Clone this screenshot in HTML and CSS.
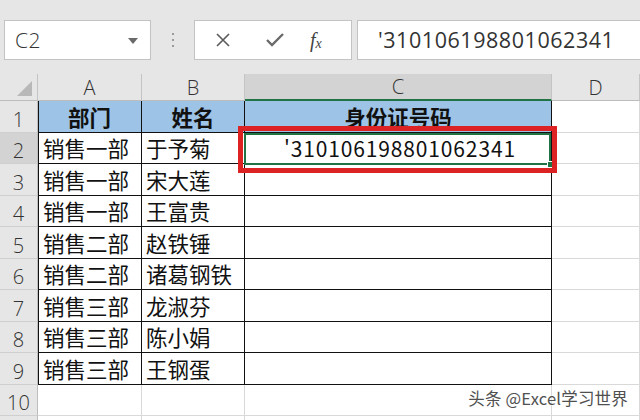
FILE: index.html
```html
<!DOCTYPE html>
<html lang="zh">
<head>
<meta charset="utf-8">
<link rel="stylesheet" href="styles.css">
</head>
<body>
<div class="toolbar">
  <div class="namebox"><span class="ref">C2</span><span class="caret"></span></div>
  <div class="grip"><i></i><i></i><i></i></div>
  <div class="fbtns">
    <svg class="ic-x" width="16" height="16" viewBox="0 0 16 16"><path d="M2 2 L14 14 M14 2 L2 14" stroke="#5a5a5a" stroke-width="1.6" fill="none"/></svg>
    <svg class="ic-ok" width="20" height="16" viewBox="0 0 20 16"><path d="M2 8 L7 13 L18 2" stroke="#6a6a6a" stroke-width="2.4" fill="none"/></svg>
    <span class="fx">f<sub>x</sub></span>
  </div>
  <div class="finput">'310106198801062341</div>
</div>
<div class="sheet">
  <div class="corner"><span class="tri"></span></div>
  <div class="ch">A</div><div class="ch">B</div><div class="ch sel">C</div><div class="ch">D</div>

  <div class="rh">1</div><div class="c t a h">部门</div><div class="c t h">姓名</div><div class="c t h">身份证号码</div><div class="c"></div>

  <div class="rh sel">2</div><div class="c t a">销售一部</div><div class="c t">于予菊</div>
  <div class="c t num active">'310106198801062341<span class="cursor"></span><span class="handle"></span><span class="mark"></span></div><div class="c"></div>

  <div class="rh">3</div><div class="c t a">销售一部</div><div class="c t">宋大莲</div><div class="c t"></div><div class="c"></div>
  <div class="rh">4</div><div class="c t a">销售一部</div><div class="c t">王富贵</div><div class="c t"></div><div class="c"></div>
  <div class="rh">5</div><div class="c t a">销售二部</div><div class="c t">赵铁锤</div><div class="c t"></div><div class="c"></div>
  <div class="rh">6</div><div class="c t a">销售二部</div><div class="c t">诸葛钢铁</div><div class="c t"></div><div class="c"></div>
  <div class="rh">7</div><div class="c t a">销售三部</div><div class="c t">龙淑芬</div><div class="c t"></div><div class="c"></div>
  <div class="rh">8</div><div class="c t a">销售三部</div><div class="c t">陈小娟</div><div class="c t"></div><div class="c"></div>
  <div class="rh">9</div><div class="c t a">销售三部</div><div class="c t">王钢蛋</div><div class="c t"></div><div class="c"></div>
  <div class="rh">10</div><div class="c"></div><div class="c"></div><div class="c"></div><div class="c"></div>
  <div class="rh"></div><div class="c"></div><div class="c"></div><div class="c"></div><div class="c"></div>
</div>
<div class="watermark">头条 @Excel学习世界</div>
</body>
</html>
```
FILE: styles.css
```css
html, body {
  margin: 0;
  padding: 0;
  width: 640px;
  height: 420px;
  overflow: hidden;
  background: #e6e6e6;
  font-family: "Noto Sans CJK SC", "Noto Sans", sans-serif;
  position: relative;
}

.toolbar {
  display: flex;
  align-items: flex-start;
  height: 74px;
  box-sizing: border-box;
  padding: 20px 0 0 4px;
  background: #e6e6e6;
}

.namebox {
  width: 147px;
  height: 40px;
  box-sizing: border-box;
  background: #fff;
  border: 1px solid #c3c3c3;
  display: flex;
  align-items: center;
  justify-content: space-between;
  padding: 0 12px 0 10px;
}

.ref {
  font-family: "Open Sans", "Noto Sans", sans-serif;
  font-weight: 300;
  font-size: 21px;
  color: #333;
  letter-spacing: 0.5px;
}

.caret {
  width: 0;
  height: 0;
  border-left: 5px solid transparent;
  border-right: 5px solid transparent;
  border-top: 6px solid #6a6a6a;
  margin-top: 2px;
}

.grip {
  width: 43px;
  height: 40px;
  display: flex;
  flex-direction: column;
  align-items: center;
  justify-content: center;
  gap: 4px;
}

.grip i {
  display: block;
  width: 2px;
  height: 2px;
  background: #9a9a9a;
}

.fbtns {
  width: 158px;
  height: 40px;
  box-sizing: border-box;
  background: #fff;
  border: 1px solid #c3c3c3;
  display: flex;
  align-items: center;
  padding-left: 20px;
}

.ic-x { margin-right: 34px; }
.ic-ok { margin-right: 25px; }

.fx {
  font-family: "Liberation Serif", serif;
  font-style: italic;
  font-size: 20px;
  color: #444;
}

.fx sub {
  font-size: 14px;
  vertical-align: -1px;
}

.finput {
  flex: 1;
  margin-left: 5px;
  margin-right: -10px;
  height: 40px;
  box-sizing: border-box;
  background: #fff;
  border: 1px solid #c3c3c3;
  padding-left: 20px;
  font-family: "Open Sans", "Noto Sans", sans-serif;
  font-size: 21.5px;
  color: #333;
  line-height: 37px;
  letter-spacing: 0.55px;
}

.sheet {
  display: grid;
  grid-template-columns: 38px 104px 103px 307px 1fr;
  grid-template-rows: 27px 32px 31px 32px 31px 32px 31px 32px 31px 32px 31px 20px;
  background: #fff;
}

.sheet > div {
  box-sizing: border-box;
  display: flex;
  align-items: center;
  min-width: 0;
}

.corner {
  background: #e6e6e6;
  border-right: 1px solid #c4c4c4;
  border-bottom: 1px solid #bdbdbd;
  position: relative;
}

.tri {
  position: absolute;
  right: 5px;
  bottom: 4px;
  width: 0;
  height: 0;
  border-left: 15px solid transparent;
  border-bottom: 15px solid #b8b8b8;
}

.ch {
  background: #e6e6e6;
  border-right: 1px solid #c4c4c4;
  border-bottom: 1px solid #bdbdbd;
  justify-content: center;
  font-family: "Open Sans", "Noto Sans", sans-serif;
  font-weight: 300;
  font-size: 20px;
  color: #333;
}

.ch.sel {
  background: #d3d3d3;
  border-bottom: 2px solid #217346;
}

.rh {
  background: #e6e6e6;
  border-right: 1px solid #bdbdbd;
  border-bottom: 1px solid #cfcfcf;
  justify-content: center;
  font-family: "Open Sans", "Noto Sans", sans-serif;
  font-weight: 300;
  font-size: 20px;
  color: #333;
  padding-top: 5px;
}

.rh.sel {
  background: #d3d3d3;
}

.c {
  background: #fff;
  border-right: 1px solid #d9d9d9;
  border-bottom: 1px solid #d9d9d9;
  font-size: 21.5px;
  line-height: 1;
  color: #111;
  padding-left: 4px;
  white-space: nowrap;
}

.c.t {
  border-right: 1px solid #111;
  border-bottom: 1px solid #111;
}

.c.a {
  box-shadow: inset 1px 0 #111;
  padding-left: 5px;
}

.c.h {
  background: #9dc3e6;
  font-weight: bold;
  justify-content: center;
  padding-left: 0;
}

.num {
  justify-content: center;
  font-family: "Noto Sans CJK SC", "Noto Sans", sans-serif;
  font-size: 21px;
  letter-spacing: 0.85px;
}

.active {
  position: relative;
}

.cursor {
  position: absolute;
  left: -1px;
  top: 0;
  right: 0;
  bottom: -2px;
  border: 2px solid #217346;
}

.handle {
  position: absolute;
  right: -3px;
  bottom: -5px;
  width: 5px;
  height: 5px;
  background: #217346;
  border: 1px solid #fff;
}

.mark {
  position: absolute;
  left: -7px;
  top: -7px;
  width: 319px;
  height: 47px;
  box-sizing: border-box;
  border: 5px solid #dc2222;
}

.watermark {
  position: absolute;
  right: 12px;
  bottom: 10px;
  font-family: "Noto Sans CJK SC", sans-serif;
  font-size: 16.5px;
  color: #505050;
  text-shadow: 0 0 2px #fff, 0 0 2px #fff;
  letter-spacing: 0.2px;
}
```
